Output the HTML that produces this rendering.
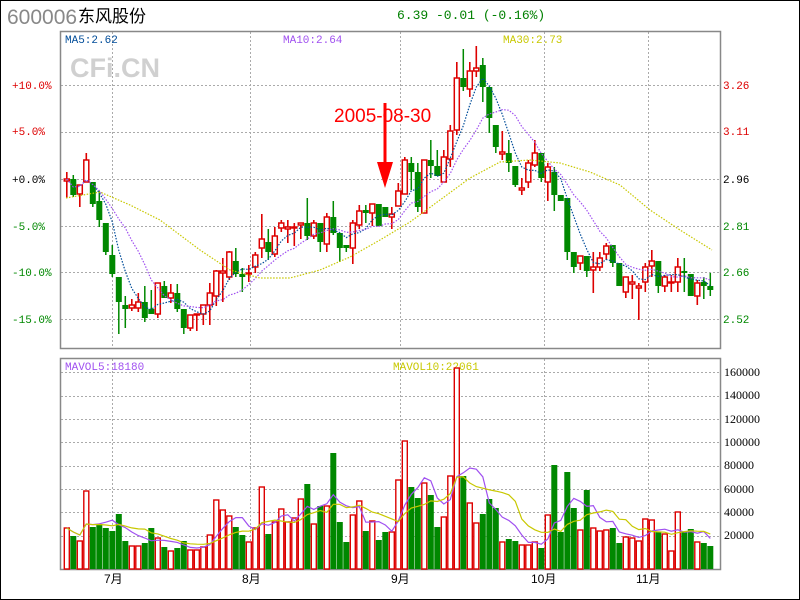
<!DOCTYPE html>
<html><head><meta charset="utf-8">
<style>
html,body{margin:0;padding:0;background:#fff;}
#w{position:relative;width:798px;height:598px;border:1px solid #000;overflow:hidden;font-family:"Liberation Sans","Noto Sans CJK SC",sans-serif;}
svg{position:absolute;left:-1px;top:-1px;}
</style></head><body>
<div id="w">
<svg id="s" width="800" height="600" xmlns="http://www.w3.org/2000/svg" font-family="Liberation Mono, DejaVu Sans Mono, monospace">
<text x="7" y="24" font-family="Liberation Sans, sans-serif" font-size="21" fill="#888">600006</text>
<text x="78" y="22" font-family="Liberation Sans, Noto Sans CJK SC, sans-serif" font-size="17" fill="#000">东风股份</text>
<text x="397" y="19" font-size="13" fill="#008000">6.39 -0.01 (-0.16%)</text>
<g id="grid" stroke="#aaa" stroke-dasharray="2 2" stroke-width="1"></g>
<rect x="60.5" y="31.5" width="660" height="317" fill="none" stroke="#888" stroke-width="1.5"/>
<rect x="60.5" y="358.5" width="660" height="211" fill="none" stroke="#888" stroke-width="1.5"/>
<text x="70" y="77" font-family="Liberation Sans, sans-serif" font-weight="bold" font-size="27" fill="#d0d0d0">CFi.CN</text>
<text x="65" y="43" font-size="11" fill="#004c99">MA5:2.62</text>
<text x="283" y="43" font-size="11" fill="#a050f0">MA10:2.64</text>
<text x="503" y="43" font-size="11" fill="#c8c800">MA30:2.73</text>
<text x="65" y="370" font-size="11" fill="#a050f0">MAVOL5:18180</text>
<text x="393" y="370" font-size="11" fill="#c8c800">MAVOL10:22061</text>
<g font-size="11">
<text x="12" y="89" fill="#d00">+10.0%</text>
<text x="12" y="135" fill="#d00">+5.0%</text>
<text x="12" y="183" fill="#000">+0.0%</text>
<text x="12" y="230" fill="#080">-5.0%</text>
<text x="12" y="276" fill="#080">-10.0%</text>
<text x="12" y="323" fill="#080">-15.0%</text>
<text x="723" y="89" fill="#d00">3.26</text>
<text x="723" y="135" fill="#d00">3.11</text>
<text x="723" y="183" fill="#000">2.96</text>
<text x="723" y="230" fill="#080">2.81</text>
<text x="723" y="276" fill="#080">2.66</text>
<text x="723" y="323" fill="#080">2.52</text>
</g>
<g font-family="Liberation Serif, serif" font-size="12" fill="#000">
<text x="724" y="376">160000</text><text x="724" y="399">140000</text><text x="724" y="423">120000</text><text x="724" y="446">100000</text><text x="724" y="469">80000</text><text x="724" y="493">60000</text><text x="724" y="516">40000</text><text x="724" y="539">20000</text>
</g>
<g font-family="Liberation Sans, Noto Sans CJK SC, sans-serif" font-size="12" fill="#000">
<text x="104" y="583">7月</text><text x="242" y="583">8月</text><text x="391" y="583">9月</text><text x="531" y="583">10月</text><text x="636" y="583">11月</text>
</g>
<text x="334" y="122" font-family="Liberation Sans, sans-serif" font-size="19" fill="#f00">2005-08-30</text>
<rect x="383.5" y="103" width="3" height="65" fill="#f00"/>
<polygon points="377,162 393,162 385,188" fill="#f00"/>
<g id="c"></g>
</svg>
</div>
<script>
var s=document.getElementById('grid'),c=document.getElementById('c'),NS='http://www.w3.org/2000/svg';
function el(p,t,a){var e=document.createElementNS(NS,t);for(var k in a)e.setAttribute(k,a[k]);p.appendChild(e);return e;}
[112,250,400,544,648].forEach(function(x){el(s,'line',{x1:x+.5,y1:32,x2:x+.5,y2:348});el(s,'line',{x1:x+.5,y1:359,x2:x+.5,y2:569});});
[85,132,179,226,272,319].forEach(function(y){el(s,'line',{x1:61,y1:y+.5,x2:720,y2:y+.5});});
[372,396,419,442,466,489,512,536].forEach(function(y){el(s,'line',{x1:61,y1:y+.5,x2:720,y2:y+.5});});
var d=[[1,179,181,172,198],[0,179,195,175,197],[1,185,194,185,207],[1,160,182,153,182],[0,182,204,182,207],[0,201,220,191,227],[0,223,252,223,255],[0,255,274,245,277],[0,277,302,277,334],[0,305,309,296,328],
[1,305,308,299,311],[1,302,308,293,312],[0,302,318,286,322],[0,309,314,290,314],[1,283,314,283,318],[0,286,298,281,298],[1,293,298,284,303],[0,293,309,284,312],[0,309,328,309,334],[1,315,328,315,331],
[1,314,315,314,331],[1,305,314,305,325],[1,293,305,283,325],[1,271,296,270,306],[1,271,273,258,302],[1,252,277,251,280],[0,261,274,248,277],[0,274,277,268,292],[1,273,274,265,282],[1,255,267,252,273],
[1,239,248,214,258],[0,242,252,229,260],[1,236,254,227,257],[1,223,228,220,232],[1,227,229,220,243],[1,227,228,223,246],[1,223,225,223,239],[0,223,236,198,240],[1,223,236,220,239],[0,223,242,223,252],
[1,217,244,213,252],[0,217,233,201,235],[0,233,248,233,262],[0,245,248,245,252],[1,223,248,220,264],[1,211,225,205,229],[0,210,213,205,223],[1,204,213,204,226],[0,204,226,204,226],[0,207,217,207,217],
[1,214,217,207,229],[1,191,206,183,206],[1,160,194,157,194],[0,163,172,157,190],[0,172,207,163,212],[1,160,213,160,213],[0,160,166,140,178],[0,166,176,150,176],[1,157,182,150,182],[1,131,159,125,167],
[1,78,130,62,135],[0,78,87,49,91],[1,71,89,62,97],[1,68,71,46,77],[0,65,87,58,102],[0,87,118,87,133],[0,125,147,125,153],[1,152,154,131,160],[0,153,163,140,172],[0,166,185,166,187],
[1,188,190,178,195],[1,163,182,160,188],[1,153,165,140,167],[0,153,178,153,182],[1,167,182,163,201],[0,172,195,167,211],[0,195,201,195,201],[0,198,252,198,260],[0,252,267,252,273],[1,256,263,256,270],
[0,256,271,256,277],[1,267,270,252,293],[1,258,267,252,271],[1,246,254,243,260],[0,245,263,245,267],[0,263,286,263,286],[1,277,292,277,298],[1,282,284,275,299],[1,286,288,283,320],[1,267,282,263,292],
[1,261,266,250,277],[0,261,286,261,293],[1,277,286,275,292],[1,282,283,275,292],[1,267,282,258,292],[0,271,273,258,292],[0,274,296,274,296],[1,283,296,280,305],[0,282,286,277,299],[0,286,290,273,296]];
var v=[528,536,541,491,527,524,528,531,514,541,546,546,543,528,538,547,551,548,541,550,550,547,535,500,510,516,527,535,542,528,487,534,522,509,522,518,499,484,524,506,506,453,522,542,515,501,531,521,540,532,532,480,
441,487,498,483,495,527,517,476,368,476,503,523,514,499,508,542,539,541,545,545,542,548,515,465,532,472,508,530,490,528,531,530,528,543,537,538,541,519,520,532,534,551,512,532,529,542,543,546];
function X(i){return 66.8+6.5*i;}
var closes=d.map(function(r){return r[0]?r[1]:r[2];});
d.forEach(function(r,i){
 var x=X(i),col=r[0]?'#d00':'#080';
 var t=r[1],b=Math.max(r[2],r[1]+1);
 if(r[0]){
  if(r[3]<t)el(c,'line',{x1:x,y1:r[3],x2:x,y2:t,stroke:col,'stroke-width':1.6});
  if(r[4]>b)el(c,'line',{x1:x,y1:b,x2:x,y2:r[4],stroke:col,'stroke-width':1.6});
  el(c,'rect',{x:x-2.5,y:t,width:5,height:b-t,fill:'#fff',stroke:col,'stroke-width':1.5});
 }else{
  el(c,'line',{x1:x,y1:r[3],x2:x,y2:r[4],stroke:col,'stroke-width':1.5});
  el(c,'rect',{x:x-3,y:t,width:6,height:b-t,fill:col});
 }
});
v.forEach(function(y,i){
 var x=X(i),r=d[i]&&d[i][0];
 if(r)el(c,'rect',{x:x-2.5,y:y,width:5,height:569-y,fill:'#fff',stroke:'#d00','stroke-width':1.4});
 else el(c,'rect',{x:x-3,y:y,width:6,height:569-y,fill:'#080'});
});
function ma(arr,n){return arr.map(function(_,i){var s=0,k=0;for(var j=Math.max(0,i-n+1);j<=i;j++){s+=arr[j];k++;}return s/k;});}
function line(pts,col,dash){var p=pts.map(function(y,i){return X(i).toFixed(1)+','+y.toFixed(1);}).join(' ');var a={points:p,fill:'none',stroke:col,'stroke-width':1.2};if(dash)a['stroke-dasharray']=dash;el(c,'polyline',a);}
line(ma(closes,5),'#004c99','1.5 1.5');
line(ma(closes,10),'#a050f0','1.5 1.5');
var m30=[[66,198],[100,192],[130,205],[160,220],[200,250],[230,270],[260,278],[290,278],[320,270],[350,257],[380,240],[410,222],[440,200],[470,178],[500,162],[530,160],[560,163],[590,172],[620,185],[650,210],[680,230],[712,250]];
el(c,'polyline',{points:m30.map(function(p){return p.join(',');}).join(' '),fill:'none',stroke:'#c8c800','stroke-width':1.2,'stroke-dasharray':'1.5 1.5'});
var vv=v.map(function(y){return 569-y;});
line(ma(vv,5).map(function(h){return 569-h;}),'#a050f0');
line(ma(vv,10).map(function(h){return 569-h;}),'#c8c800');
</script>
</body></html>
